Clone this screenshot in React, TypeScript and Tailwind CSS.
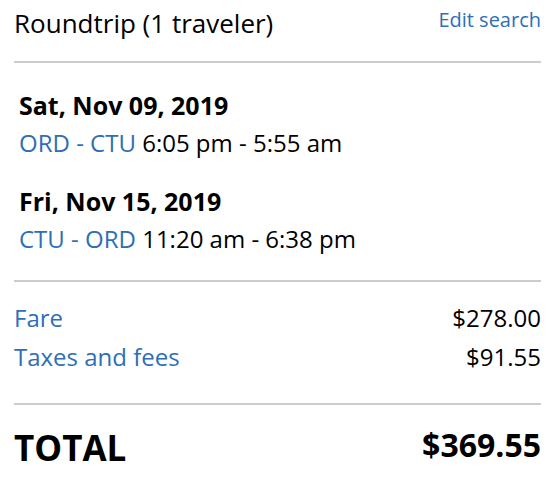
import React from "react";

const blue = "text-[#2c6fb7]";

export default function App() {
  return (
    <div className="w-[554px] h-[484px] bg-white pl-[14px] pr-[13px] pt-[3px] text-black" style={{ fontFamily: '"Open Sans", sans-serif' }}>
      <div className="flex justify-between items-start h-[58px]">
        <div className="text-[26px] leading-[40px]">Roundtrip (1 traveler)</div>
        <div className={`text-[20px] leading-[34px] ${blue}`}>Edit search</div>
      </div>
      <div className="h-[2px] bg-[#cccccc]" />
      <div className="pl-[5px] pt-[24px] pb-[23px] flex flex-col gap-[22px]">
        <div>
          <div className="text-[25px] font-bold leading-[37px]">Sat, Nov 09, 2019</div>
          <div className="text-[24px] leading-[37px]"><span className={blue}>ORD - CTU</span> 6:05 pm - 5:55 am</div>
        </div>
        <div>
          <div className="text-[25px] font-bold leading-[37px]">Fri, Nov 15, 2019</div>
          <div className="text-[24px] leading-[37px]"><span className={blue}>CTU - ORD</span> 11:20 am - 6:38 pm</div>
        </div>
      </div>
      <div className="h-[2px] bg-[#cccccc]" />
      <div className="pt-[16px] pb-[27px]">
        <div className="flex justify-between text-[24px] leading-[39px]">
          <span className={blue}>Fare</span>
          <span>$278.00</span>
        </div>
        <div className="flex justify-between text-[24px] leading-[39px]">
          <span className={blue}>Taxes and fees</span>
          <span>$91.55</span>
        </div>
      </div>
      <div className="h-[2px] bg-[#cccccc]" />
      <div className="flex justify-between items-start pt-[16px] font-bold">
        <span className="text-[35px] leading-[54px]">TOTAL</span>
        <span className="text-[32px] leading-[48px]">$369.55</span>
      </div>
    </div>
  );
}
